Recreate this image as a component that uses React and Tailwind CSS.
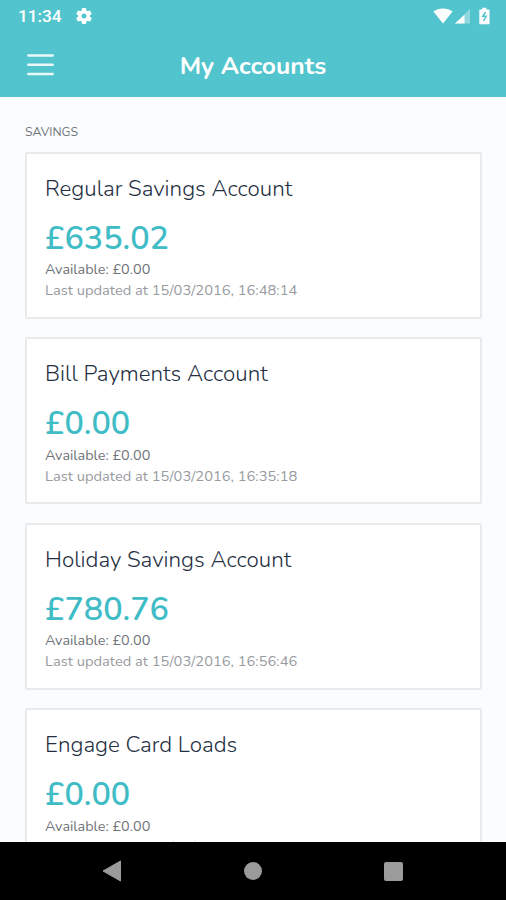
import React from 'react';

const accounts = [
  { id: 1, name: 'Regular Savings Account', balance: '£635.02', available: '£0.00', updated: '15/03/2016, 16:48:14' },
  { id: 2, name: 'Bill Payments Account', balance: '£0.00', available: '£0.00', updated: '15/03/2016, 16:35:18' },
  { id: 3, name: 'Holiday Savings Account', balance: '£780.76', available: '£0.00', updated: '15/03/2016, 16:56:46' },
  { id: 4, name: 'Engage Card Loads', balance: '£0.00', available: '£0.00', updated: '15/03/2016, 16:37:23' },
];

const StatusBar = () => (
  <div className="flex h-8 items-center justify-between pl-[18px] pr-[16px] font-['Roboto',sans-serif]">
    <div className="flex items-center gap-[12px]">
      <span className="text-[17.2px] leading-8 font-medium">11:34</span>
      <svg className="-mt-px" width="20" height="20" viewBox="0 0 24 24" fill="currentColor">
        <path d="M19.14 12.94c.04-.3.06-.61.06-.94s-.02-.64-.07-.94l2.03-1.58a.49.49 0 0 0 .12-.61l-1.92-3.32a.49.49 0 0 0-.59-.22l-2.39.96a7 7 0 0 0-1.62-.94l-.36-2.54a.48.48 0 0 0-.48-.41h-3.84a.48.48 0 0 0-.47.41l-.36 2.54c-.59.24-1.13.57-1.62.94l-2.39-.96a.48.48 0 0 0-.59.22L2.74 8.87a.48.48 0 0 0 .12.61l2.03 1.58c-.05.3-.09.63-.09.94s.02.64.07.94l-2.03 1.58a.49.49 0 0 0-.12.61l1.92 3.32c.12.22.37.29.59.22l2.39-.96c.5.38 1.03.7 1.62.94l.36 2.54c.05.24.24.41.48.41h3.84c.24 0 .44-.17.47-.41l.36-2.54a7 7 0 0 0 1.62-.94l2.39.96c.22.08.47 0 .59-.22l1.92-3.32a.48.48 0 0 0-.12-.61zM12 15a3 3 0 1 1 0-6 3 3 0 0 1 0 6z" />
      </svg>
    </div>
    <div className="-mt-px flex items-center">
      <svg width="20" height="16" viewBox="0 0 20 16" fill="currentColor">
        <path d="M10 15.500.4 3.500C3 1.500 6.300.500 10 .500s7 1 9.600 3z" />
      </svg>
      <svg className="ml-[2px]" width="15" height="16" viewBox="0 0 15 16" fill="currentColor">
        <path d="M15 1v14.500H0z" opacity=".35" />
        <path d="M9.500 6.700v8.800H0z" />
      </svg>
      <svg className="ml-[9px]" width="11" height="18" viewBox="0 0 11 18" fill="currentColor">
        <path d="M3.200.700h4.200v1.800h2.100c.6 0 1 .4 1 1v12.700c0 .6-.4 1-1 1H1.300c-.6 0-1-.4-1-1V3.500c0-.6.4-1 1-1h1.900z" />
        <path d="M6.500 5.200 3.800 9.300h3.300L4.500 14" fill="none" stroke="#52c4cd" strokeWidth="1.500" />
      </svg>
    </div>
  </div>
);

const Header = () => (
  <header className="h-[97px] shrink-0 bg-[#52c4cd] text-white">
    <StatusBar />
    <div className="grid h-[65px] grid-cols-[54px_1fr_54px] items-center">
      <button className="ml-[27px]" aria-label="Menu">
        <svg width="27" height="24" viewBox="0 0 27 24" stroke="currentColor" strokeWidth="2.400" strokeLinecap="round" opacity=".88">
          <path d="M1.300 2.500h24.400M1.300 11.700h24.400M1.300 21h24.400" />
        </svg>
      </button>
      <h1 className="pt-[2px] text-center text-[24.7px] leading-8 font-bold">My Accounts</h1>
    </div>
  </header>
);

const AccountCard = ({ account }) => (
  <div className="h-[167px] shrink-0 rounded-[2px] border-2 border-[#e8eaeb] bg-white px-[18px] pt-[21px] whitespace-nowrap">
    <h3 className="text-[22.4px] leading-7 font-light text-[#252f42]">{account.name}</h3>
    <p className="mt-[15px] text-[32.3px] leading-10 font-semibold text-[#3fbcc6]">{account.balance}</p>
    <p className="mt-[1.300px] text-[14.4px] leading-5 text-[#707378]">Available: {account.available}</p>
    <p className="text-[14.7px] leading-[22px] text-[#989b9f]">Last updated at {account.updated}</p>
  </div>
);

const NavBar = () => (
  <nav className="grid h-[58px] shrink-0 grid-cols-[183px_140px_183px] items-center bg-black text-[#9b9b9b]">
    <svg className="ml-[102px]" width="20" height="22" viewBox="0 0 20 22" fill="currentColor">
      <path d="M18.500 1v20L1 11z" stroke="currentColor" strokeLinejoin="round" />
    </svg>
    <span className="mx-auto h-[18px] w-[18px] rounded-full bg-[#9b9b9b]" />
    <span className="ml-[61px] h-[19px] w-[19px] rounded-[2px] bg-[#9b9b9b]" />
  </nav>
);

const App = () => (
  <div className="flex h-[900px] w-[506px] flex-col overflow-hidden bg-[#fafcfe] font-['Nunito','Lato',sans-serif]">
    <Header />
    <main className="flex min-h-0 flex-1 flex-col overflow-hidden pl-[25px] pr-[24px] pt-[26px]">
      <h2 className="shrink-0 text-[12.3px] leading-[18px] text-[#74787c]">SAVINGS</h2>
      <div className="mt-[10.900px] flex flex-col gap-[18.500px]">
        {accounts.map(account => (
          <AccountCard key={account.id} account={account} />
        ))}
      </div>
    </main>
    <NavBar />
  </div>
);

export default App;
